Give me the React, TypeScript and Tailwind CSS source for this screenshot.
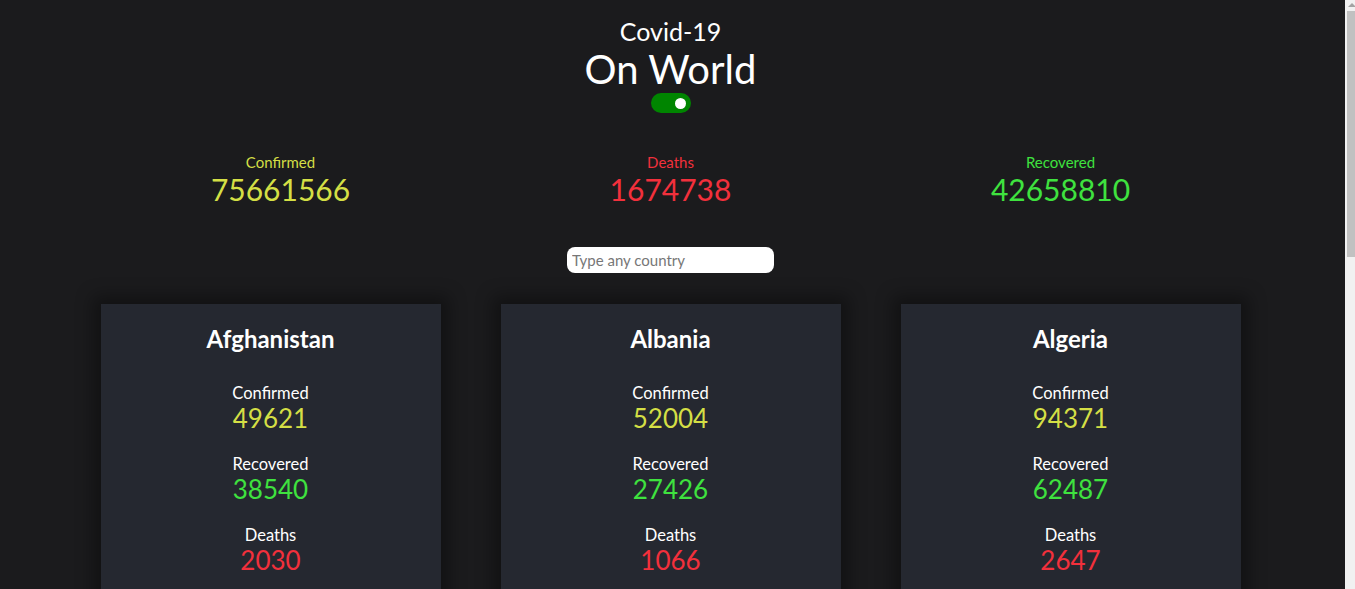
import React from "react";

const countries = [
  { name: "Afghanistan", c: "49621", r: "38540", d: "2030" },
  { name: "Albania", c: "52004", r: "27426", d: "1066" },
  { name: "Algeria", c: "94371", r: "62487", d: "2647" },
  { name: "Andorra", c: "7519", r: "6903", d: "80" },
  { name: "Angola", c: "16562", r: "9220", d: "384" },
  { name: "Antigua and Barbuda", c: "152", r: "145", d: "5" },
];

function Card({ name, c, r, d }: { name: string; c: string; r: string; d: string }) {
  return (
    <div className="w-[340px] bg-[#252830] shadow-[0_0_16px_8px_rgba(0,0,0,0.35)] flex flex-col items-center pt-[17px] pb-[30px]">
      <div className="text-[24px] font-bold text-white leading-[36px] mb-[26px]">{name}</div>
      {[
        ["Confirmed", c, "text-[#d4df45]"],
        ["Recovered", r, "text-[#3fe23f]"],
        ["Deaths", d, "text-[#f2303c]"],
      ].map(([label, val, cls]) => (
        <div key={label} className="flex flex-col items-center mb-[21px]">
          <div className="text-[16.5px] text-white leading-[20px]">{label}</div>
          <div className={"text-[26px] leading-[30px] " + cls}>{val}</div>
        </div>
      ))}
    </div>
  );
}

export default function App() {
  return (
    <div
      className="h-screen overflow-hidden flex bg-[#1b1b1d] text-white"
      style={{ fontFamily: "Lato, 'Noto Sans', sans-serif" }}
    >
      <div className="flex-1 min-w-0 pr-[4px] pb-10">
        <div className="flex flex-col items-center pt-[14px]">
          <div className="text-[25px] leading-[34px]">Covid-19</div>
          <div className="text-[40px] leading-[42px]">On World</div>
          <div className="mt-[3px] w-[40px] h-[20px] rounded-full bg-[#008500] flex items-center justify-end pr-[5px]">
            <div className="w-[11px] h-[11px] rounded-full bg-white" />
          </div>
        </div>

        <div className="mx-auto w-[1170px] grid grid-cols-3 mt-[39px]">
          {[
            ["Confirmed", "75661566", "text-[#d4df45]"],
            ["Deaths", "1674738", "text-[#f2303c]"],
            ["Recovered", "42658810", "text-[#3fe23f]"],
          ].map(([label, val, cls]) => (
            <div key={label} className={"flex flex-col items-center " + cls}>
              <div className="text-[15px] leading-[20px]">{label}</div>
              <div className="text-[30px] leading-[34px]">{val}</div>
            </div>
          ))}
        </div>

        <div className="flex justify-center mt-[41px]">
          <input
            placeholder="Type any country"
            className="w-[207px] h-[26px] rounded-[8px] bg-white text-black px-[5px] text-[15px] placeholder:text-[#777] outline-none"
          />
        </div>

        <div className="flex justify-center mt-[31px]">
          <div className="grid grid-cols-[340px_340px_340px] gap-x-[60px] gap-y-[60px]">
            {countries.map((k) => (
              <Card key={k.name} {...k} />
            ))}
          </div>
        </div>
      </div>

      <div className="w-[10px] shrink-0 bg-[#f1f1f1] flex flex-col items-end">
        <svg width="8" height="9" viewBox="0 0 8 9" className="mt-[1px]">
          <path d="M1 6 L5 2 L9 6 Z" fill="#a3a3a3" />
        </svg>
        <div className="mt-[1px] w-[8px] h-[246px] bg-[#c1c1c1]" />
      </div>
    </div>
  );
}
